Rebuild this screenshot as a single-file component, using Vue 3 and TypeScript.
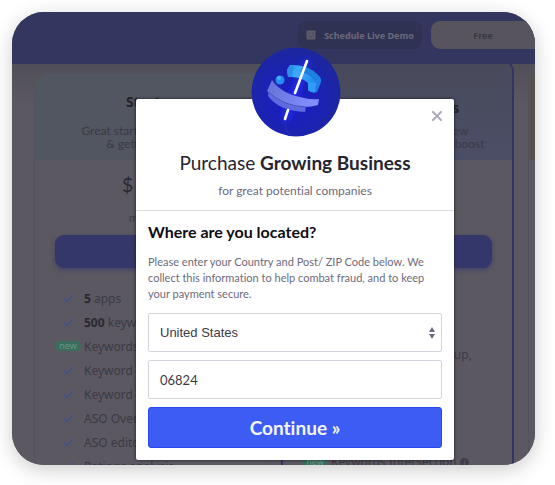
<script setup lang="ts">
import { ref } from 'vue'

interface Feature {
  text: string
  count?: string
  isNew?: boolean
}

const country = ref('United States')
const zip = ref('06824')
const open = ref(true)

const countries: string[] = ['United States', 'Canada', 'United Kingdom']

const starter: Feature[] = [
  { count: '5', text: 'apps' },
  { count: '500', text: 'keyw' },
  { text: 'Keywords', isNew: true },
  { text: 'Keyword' },
  { text: 'Keyword' },
  { text: 'ASO Over' },
  { text: 'ASO editor' },
  { text: 'Ratings analysis' },
]
</script>

<template>
  <div class="frame">
    <header class="topbar">
      <button class="demo" type="button">
        <svg width="10" height="10" viewBox="0 0 10 10" aria-hidden="true">
          <rect x="0.5" y="0.5" width="9" height="9" rx="1" fill="#5c5b6c" />
          <path d="M2 3h2M6 3h2M2.500 5.500L4.500 7.500L8 4.500" stroke="#484963" fill="none" />
        </svg>
        Schedule Live Demo
      </button>
      <button class="free" type="button">Free</button>
    </header>

    <main class="plans">
      <section class="plan starter">
        <div class="plan-head">
          <h2>Starter</h2>
          <p>Great start for newcomers<br />&amp; getting started</p>
        </div>
        <div class="price"><span class="currency">$</span><span class="amount">29</span></div>
        <div class="period">monthly</div>
        <button class="choose" type="button">Select</button>
        <ul>
          <li v-for="(f, i) in starter" :key="i">
            <span class="mark">
              <span v-if="f.isNew" class="new">new</span>
              <svg v-else width="11" height="9" viewBox="0 0 11 9" aria-hidden="true">
                <path d="M0.800 4.800L3.800 7.800L10.200 1" fill="none" stroke="#424f96" stroke-width="1.200" />
              </svg>
            </span>
            <span><b v-if="f.count">{{ f.count }}&nbsp;</b>{{ f.text }}</span>
          </li>
        </ul>
      </section>

      <section class="plan growing">
        <div class="plan-head">
          <h2>Growing Business</h2>
          <p>For growing apps with new<br />products that need a visual boost</p>
        </div>
        <button class="choose" type="button" aria-label="Choose Growing Business"></button>
        <div class="extras">
          <p>Personal accounts setup,</p>
          <div class="extra-row">
            <span class="new">new</span>
            <span>Keywords Intersection</span>
            <svg width="9" height="9" viewBox="0 0 10 10" aria-hidden="true">
              <circle cx="5" cy="5" r="5" fill="#3f3d49" />
              <path d="M5 2v1.4M5 4.5V8" stroke="#5b5861" stroke-width="1.4" />
            </svg>
          </div>
        </div>
      </section>

      <section class="plan next"><div class="plan-head"></div></section>
    </main>

    <div v-if="open" class="overlay">
      <form class="dialog" role="dialog" aria-labelledby="dialog-title" @submit.prevent>
        <svg class="logo" width="90" height="90" viewBox="0 0 90 90" aria-hidden="true">
          <defs>
            <radialGradient id="disc" cx="45%" cy="60%" r="58%">
              <stop offset="0" stop-color="#1a1cc8" />
              <stop offset="0.6" stop-color="#1c22b2" />
              <stop offset="1" stop-color="#1c279f" />
            </radialGradient>
            <linearGradient id="cyan" x1="0" y1="0" x2="1" y2="0.5">
              <stop offset="0" stop-color="#2a9cf6" />
              <stop offset="0.4" stop-color="#3fa9ff" />
              <stop offset="1" stop-color="#1c80ea" />
            </linearGradient>
            <linearGradient id="violet" x1="0" y1="0" x2="1" y2="0.3">
              <stop offset="0" stop-color="#656fd6" />
              <stop offset="1" stop-color="#828cfc" />
            </linearGradient>
            <filter id="glow" x="-200%" y="-20%" width="500%" height="140%">
              <feGaussianBlur stdDeviation="3" />
            </filter>
          </defs>
          <circle cx="45" cy="45" r="44.5" fill="url(#disc)" />
          <path d="M56 14L34 73" stroke="#2432ff" stroke-width="6" filter="url(#glow)" />
          <path d="M39 18Q54 17 66 27Q71 31 70 35L66 45Q62 47 57 43L57 36Q50 29 37 30L36 23Z" fill="url(#cyan)" />
          <path d="M39 18L43 19L41 30L37 30L36 23Z" fill="#2b8fea" />
          <path d="M52 19Q63 22 69 31L64 34Q58 26 49 25Z" fill="#1d7fe0" />
          <path d="M57 35L65 36L64 45Q60 46 57 43Z" fill="#2f9cfa" />
          <path d="M18 43C26 53 40 60 55 60L54 65C37 64 24 59 17 49Z" fill="#5f6ae0" />
          <path d="M21 33C27 42 38 48 49 50Q59 53 68 52L67 58C50 63 28 58 16 44Z" fill="url(#violet)" />
          <path d="M17 45Q32 59 55 60" fill="none" stroke="#4751b8" />
          <circle cx="29" cy="33" r="4.500" fill="#278cf0" />
          <circle cx="28" cy="31" r="2" fill="#4cacff" />
          <path d="M56 14L44 46M37 63L34 72" stroke="#fff" stroke-width="2.600" stroke-linecap="round" />
          <path d="M34 76Q35 85 40 88" stroke="#3038b8" stroke-width="2" opacity="0.4" fill="none" />
        </svg>
        <button class="close" type="button" aria-label="Close" @click="open = false">
          <svg width="12" height="12" viewBox="0 0 12 12" aria-hidden="true">
            <path d="M2 2L10 10M10 2L2 10" stroke="#aeabc0" stroke-width="2.200" stroke-linecap="round" />
          </svg>
        </button>

        <div class="dialog-head">
          <h1 id="dialog-title">Purchase <b>Growing Business</b></h1>
          <p>for great potential companies</p>
        </div>

        <div class="dialog-body">
          <h3>Where are you located?</h3>
          <p class="help">
            Please enter your Country and Post/ ZIP Code below. We collect this information to help
            combat fraud, and to keep your payment secure.
          </p>
          <div class="select-wrap">
            <select v-model="country" aria-label="Country">
              <option v-for="c in countries" :key="c">{{ c }}</option>
            </select>
            <svg class="arrows" width="6" height="12" viewBox="0 0 6 12" aria-hidden="true">
              <path d="M0 5L3 0L6 5ZM0 7L3 12L6 7Z" fill="#706d80" />
            </svg>
          </div>
          <input v-model="zip" type="text" aria-label="Post/ ZIP Code" />
          <button class="continue" type="submit">Continue »</button>
        </div>
      </form>
    </div>
  </div>
</template>

<style>
body {
  background: #fff;
}
</style>

<style scoped>
* {
  box-sizing: border-box;
}
h1, h2, h3, p, ul {
  margin: 0;
  padding: 0;
}
button {
  border: 0;
  padding: 0;
  cursor: pointer;
}
.frame {
  position: relative;
  display: flex;
  flex-direction: column;
  height: calc(100vh - 32px);
  margin: 12px 20px 20px 12px;
  overflow: hidden;
  border-radius: 32px;
  background: #5b5861;
  box-shadow: 0 5px 20px rgba(0, 0, 0, 0.2);
  font-family: "Noto Sans", "Open Sans", sans-serif;
  font-variant-ligatures: none;
  color: #3c3a45;
}
.topbar {
  display: flex;
  flex: none;
  justify-content: flex-end;
  gap: 9px;
  height: 52px;
  padding-top: 9px;
  background: #33375f;
}
.topbar button {
  height: 28px;
  border-radius: 9px;
  font: 700 9px "Noto Sans", sans-serif;
}
.topbar .demo {
  display: flex;
  align-items: center;
  justify-content: center;
  gap: 8px;
  width: 124px;
  background: #303253;
  color: #6b6979;
}
.topbar .free {
  width: 104px;
  border-radius: 9px 0 0 9px;
  background: #57545e;
  color: #393946;
}
.plans {
  display: grid;
  flex: 1;
  grid-template-columns: repeat(3, 233px);
  gap: 14px;
  min-height: 0;
  overflow: hidden;
  padding-left: 22px;
  background: linear-gradient(#504e57, #5b5861 40px);
}
.plan {
  display: flex;
  flex-direction: column;
  margin-top: 9px;
  overflow: hidden;
  border: 1px solid #54525c;
  border-bottom: 0;
  border-radius: 14px 14px 0 0;
  text-align: center;
}
.plan-head {
  flex: none;
  height: 86px;
  padding-top: 20px;
  background: #515660;
}
.growing {
  margin-top: -6px;
  border-width: 2px;
  border-color: #303566;
}
.growing .plan-head {
  height: 100px;
  padding-top: 40px;
  background: linear-gradient(#484a5a, #4b4e66);
}
.next .plan-head {
  background: #57524f;
}
h2 {
  margin-bottom: 14px;
  font-size: 14px;
  line-height: 16px;
  color: #23222c;
}
.growing h2 {
  margin-bottom: 8px;
}
.plan-head p {
  font: 12px/13px Lato, sans-serif;
}
.price {
  display: flex;
  flex: none;
  justify-content: center;
  height: 50px;
  padding-top: 12px;
  font-family: Lato, sans-serif;
  color: #2b2934;
}
.currency {
  margin-right: 2px;
  font-size: 20px;
  line-height: 24px;
}
.amount {
  font-size: 38px;
  font-weight: 700;
  line-height: 38px;
  color: #17161e;
}
.period {
  flex: none;
  font: 12px/16px Lato, sans-serif;
}
.choose {
  flex: none;
  height: 33px;
  margin: 9px 20px 18px;
  border-radius: 9px;
  background: #33376a;
  box-shadow: 0 2px 5px #41426a;
  font: 700 10px "Noto Sans", sans-serif;
  color: #77758a;
}
.growing .choose {
  margin-top: 75px;
}
ul {
  list-style: none;
  text-align: left;
}
li {
  display: flex;
  align-items: center;
  height: 24px;
  padding-left: 20px;
  font-size: 12px;
  white-space: nowrap;
}
li b {
  color: #292832;
}
.mark {
  display: flex;
  justify-content: center;
  width: 26px;
  margin-right: 3px;
}
.new {
  width: 26px;
  height: 10px;
  border-radius: 5px;
  background: #386e5b;
  font-size: 9px;
  line-height: 9px;
  text-align: center;
  color: #6c9586;
}
.extras {
  padding-top: 61px;
  font-size: 12px;
  line-height: 16px;
  text-align: left;
}
.extras p {
  padding-left: 48px;
}
.extra-row {
  display: flex;
  align-items: center;
  gap: 3px;
  padding: 91px 0 0 19px;
  white-space: nowrap;
}
.overlay {
  position: absolute;
  inset: 0;
  padding: 87px 81px 5px 124px;
}
.dialog {
  position: relative;
  padding-top: 52px;
  border-radius: 2px;
  background: #fff;
  box-shadow: 0 0 3px #16151e;
  font-family: Lato, sans-serif;
}
.logo {
  position: absolute;
  top: -52px;
  left: calc(50% - 44px);
}
.close {
  position: absolute;
  top: 11px;
  right: 11px;
  width: 12px;
  height: 12px;
  background: none;
  line-height: 0;
}
.dialog-head {
  padding-bottom: 11px;
  border-bottom: 1px solid #dcdae6;
  text-align: center;
}
h1 {
  font-size: 19px;
  font-weight: 400;
  line-height: 24px;
  color: #252430;
}
.dialog-head p {
  margin-top: 8px;
  font-size: 12px;
  line-height: 16px;
  color: #6d6a7c;
}
.dialog-body {
  display: flex;
  flex-direction: column;
  gap: 8px;
  padding: 11px 12px 12px;
}
h3 {
  font-size: 16px;
  line-height: 20px;
  color: #0d0d12;
}
.help {
  margin: 4px 0 3px;
  font-size: 11px;
  line-height: 16px;
  color: #6d6a7c;
}
.select-wrap {
  position: relative;
  display: flex;
}
select,
input {
  width: 100%;
  height: 39px;
  padding: 0 11px;
  border: 1px solid #d5d3df;
  border-radius: 2px;
  background: #fff;
  color: #3c3a49;
}
select {
  appearance: none;
  font: 13px "Liberation Sans", sans-serif;
}
input {
  font: 13px Lato, sans-serif;
}
.arrows {
  position: absolute;
  top: 14px;
  right: 7px;
  pointer-events: none;
}
.continue {
  height: 41px;
  border: 1px solid #2948ee;
  border-radius: 3px;
  background: #3c5cf3;
  font: 700 19px Lato, sans-serif;
  font-variant-ligatures: none;
  color: #f4f6ff;
}
</style>
